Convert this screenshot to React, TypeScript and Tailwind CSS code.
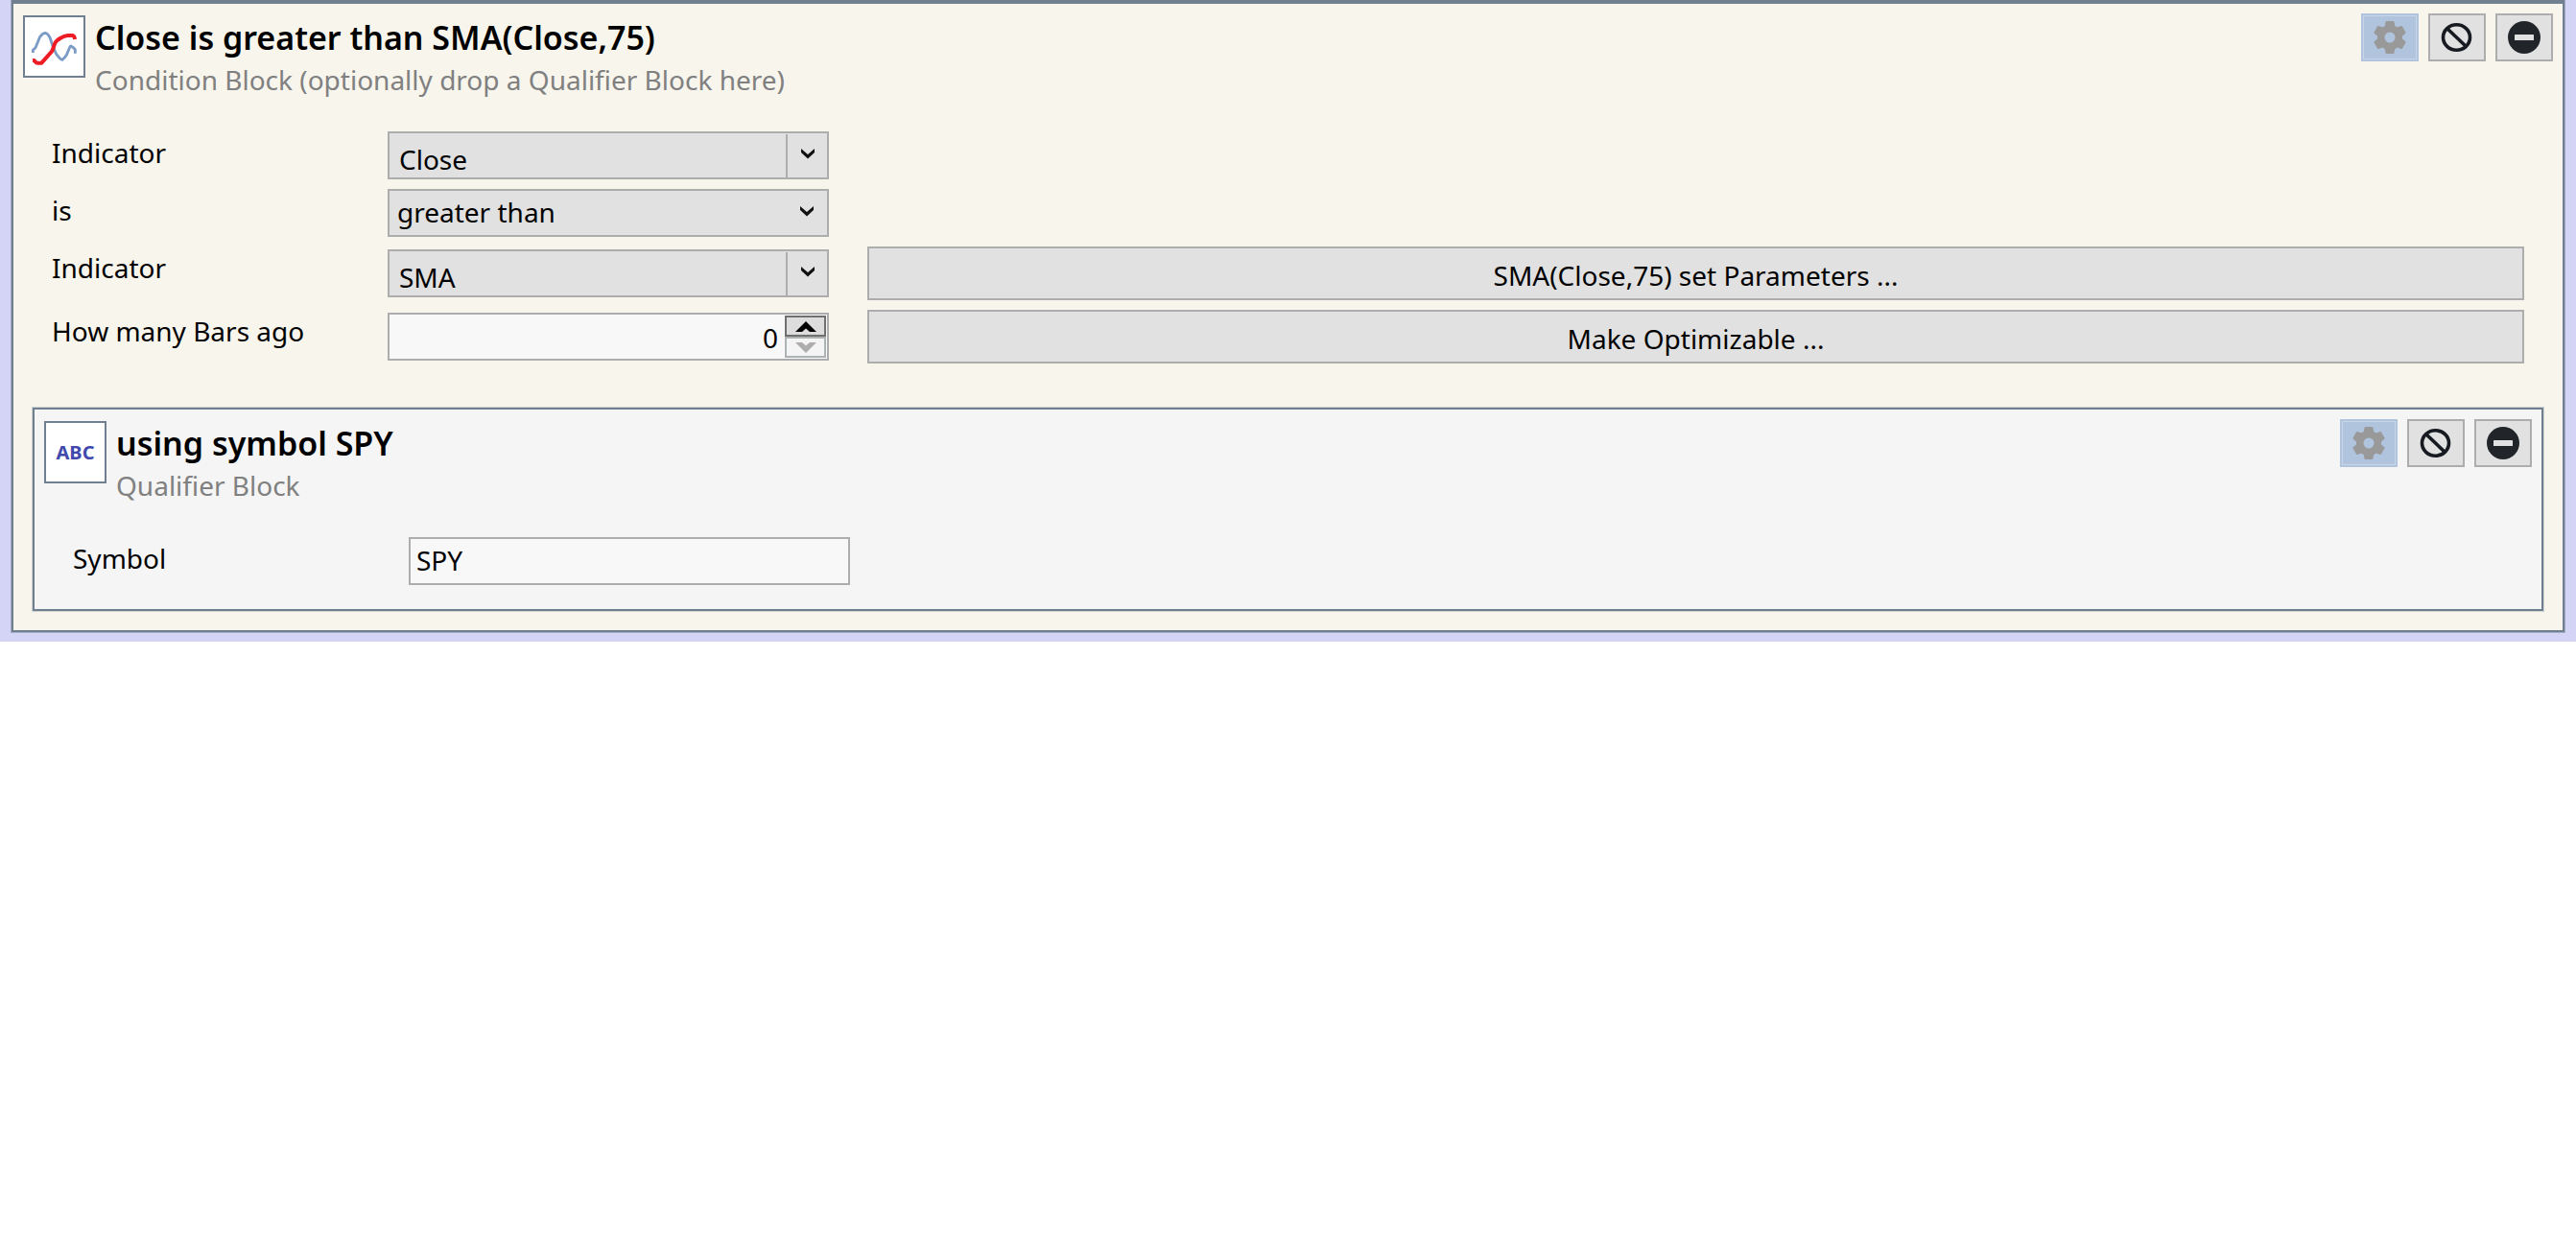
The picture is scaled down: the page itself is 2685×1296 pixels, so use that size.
import React, { useId, useState } from 'react';

// Icons
function GearIcon() {
  return (
    <svg width="34" height="34" viewBox="-17 -17 34 34" fill="#999999" aria-hidden="true">
      <defs>
        <mask id="gear-hole">
          <rect x="-17" y="-17" width="34" height="34" fill="#fff" />
          <circle r="5.5" fill="#000" />
        </mask>
      </defs>
      <g mask="url(#gear-hole)">
        <circle r="13" />
        {[0, 60, 120, 180, 240, 300].map(a => (
          <path key={a} d="M-5.5 -11 L-4.4 -16.2 Q-4.2 -17 -3.4 -17 H3.4 Q4.2 -17 4.4 -16.2 L5.5 -11 Z" transform={`rotate(${a})`} />
        ))}
      </g>
    </svg>
  );
}

function BanIcon() {
  return (
    <svg width="34" height="34" viewBox="-16.5 -17 34 34" fill="none" stroke="#171b21" strokeWidth="3.6" aria-hidden="true">
      <ellipse rx="14" ry="13.2" />
      <path d="M-10 -9.5 L10 9.5" />
    </svg>
  );
}

function RemoveIcon() {
  return (
    <svg width="34" height="34" viewBox="-17 -17 34 34" aria-hidden="true">
      <circle r="17" fill="#212529" />
      <rect x="-10" y="-3" width="20" height="6" rx="0.5" fill="#e1e1e1" />
    </svg>
  );
}

function ChartIcon() {
  return (
    <svg className="h-full w-full" viewBox="78 53 183 183" fill="none" strokeLinejoin="round" aria-hidden="true">
      <path d="M103 164 V156 L111 148 L125 114 Q133 103 141 102 Q149 103 156 116 L166 146 L176 168 L184 178 Q190 186 195 186 Q201 182 208 171 L216 152 Q219 143 222 143 Q230 147 235 154 V166" stroke="#7a9cc6" strokeWidth="8.5" />
      <path d="M102 188 H107 Q112 196 118 196 H130 L162 160 Q167 150 171 136 Q177 124 190 118 Q200 111 212 110 H228 Q233 112 234 122" stroke="#ee1c25" strokeWidth="12" />
    </svg>
  );
}

function Chevron() {
  return (
    <svg width="14" height="11" viewBox="0 0 14 11" aria-hidden="true">
      <path d="M0 0 L7 6 L14 0 V4 L7 10.5 L0 4 Z" fill="#111" />
    </svg>
  );
}

const iconButton = 'flex h-[50px] w-[60px] items-center justify-center border-2';

type HeaderProps = {
  icon: React.ReactNode;
  title: string;
  subtitle: string;
};

function BlockHeader({ icon, title, subtitle }: HeaderProps) {
  return (
    <header className="flex items-start justify-between">
      <div className="flex gap-2.5 pt-0.5">
        <div className="flex h-[65px] w-[65px] items-center justify-center border-2 border-[#708090] bg-white">{icon}</div>
        <div>
          <h2 className="text-[34px] font-semibold leading-[46px]">{title}</h2>
          <p className="leading-[42px] text-[#808080]">{subtitle}</p>
        </div>
      </div>
      <div className="flex gap-2.5">
        <button type="button" aria-label="Settings" className={`${iconButton} border-[#b0c4de] bg-[#b0c4de] ring-1 ring-inset ring-white/30`}>
          <GearIcon />
        </button>
        <button type="button" aria-label="Disable" className={`${iconButton} border-[#adadad] bg-[#e1e1e1]`}>
          <BanIcon />
        </button>
        <button type="button" aria-label="Remove" className={`${iconButton} border-[#adadad] bg-[#e1e1e1]`}>
          <RemoveIcon />
        </button>
      </div>
    </header>
  );
}

type RowProps = {
  label: string;
  action?: string;
  children: (id: string) => React.ReactNode;
};

function FormRow({ label, action, children }: RowProps) {
  const id = useId();
  return (
    <div className="flex items-center">
      <label htmlFor={id} className="w-[350px] shrink-0 self-start leading-[44px]">{label}</label>
      <div className="w-[460px] shrink-0">{children(id)}</div>
      {action && (
        <button type="button" className="ml-10 h-14 flex-1 border-2 border-[#adadad] bg-[#e1e1e1] pt-1 leading-[40px]">
          {action}
        </button>
      )}
    </div>
  );
}

type SelectProps = {
  id: string;
  options: string[];
  split?: boolean;
};

function SelectBox({ id, options, split }: SelectProps) {
  return (
    <div className="relative">
      <select
        id={id}
        className={`block h-[50px] w-full appearance-none rounded-none border-2 border-[#adadad] bg-[#e1e1e1] ${split ? 'pl-2.5 pt-1.5' : 'pb-0.5 pl-2'}`}
      >
        {options.map(o => <option key={o}>{o}</option>)}
      </select>
      <div className={`pointer-events-none absolute right-0.5 top-[3px] bottom-0.5 flex w-[43px] justify-center pt-[15px] ${split ? 'border-l-2 border-[#adadad]' : ''}`}>
        <Chevron />
      </div>
    </div>
  );
}

function NumberBox({ id }: { id: string }) {
  const [value, setValue] = useState(0);
  return (
    <div className="flex h-[50px] border-2 border-[#adadad] bg-[#f8f8f8]">
      <input
        id={id}
        type="text"
        inputMode="numeric"
        value={value}
        onChange={e => setValue(Number(e.target.value) || 0)}
        className="min-w-0 flex-1 bg-transparent pr-[7px] pt-0.5 text-right"
      />
      <div className="my-px mr-px flex w-[43px] flex-col">
        <button type="button" aria-label="Increase" onClick={() => setValue(value + 1)} className="flex flex-1 items-center justify-center border-2 border-[#707070] bg-[#dddddd]">
          <svg width="22" height="11" viewBox="0 0 22 11" aria-hidden="true"><path d="M0 11 L11 0 L22 11 H15 L11 7.5 L7 11 Z" /></svg>
        </button>
        <button type="button" aria-label="Decrease" disabled={value === 0} onClick={() => setValue(value - 1)} className="flex flex-1 items-center justify-center border-2 border-[#adb2b5] bg-[#f4f4f4]">
          <svg width="22" height="11" viewBox="0 0 22 11" fill="#adadad" aria-hidden="true"><path d="M0 0 L11 11 L22 0 H15 L11 3.5 L7 0 Z" /></svg>
        </button>
      </div>
    </div>
  );
}

export default function App() {
  const [symbol, setSymbol] = useState('SPY');

  return (
    <main className="bg-[#d4d4f7] px-3 pb-2.5 font-['Noto_Sans',sans-serif] text-[28px] text-black">
      {/* Condition block */}
      <section className="border-2 border-t-4 border-[#708090] bg-[#f8f5ed] pb-5 ring-1 ring-[#708090]/50">
        <div className="p-2.5 pb-0">
          <BlockHeader icon={<ChartIcon />} title="Close is greater than SMA(Close,75)" subtitle="Condition Block (optionally drop a Qualifier Block here)" />
        </div>

        <div className="mt-[33px] flex flex-col gap-2.5 px-10">
          <FormRow label="Indicator">{id => <SelectBox id={id} split options={['Close', 'Open', 'High', 'Low']} />}</FormRow>
          <FormRow label="is">{id => <SelectBox id={id} options={['greater than', 'less than', 'equal to']} />}</FormRow>
          <FormRow label="Indicator" action="SMA(Close,75) set Parameters ...">
            {id => <SelectBox id={id} split options={['SMA', 'EMA', 'RSI']} />}
          </FormRow>
          <FormRow label="How many Bars ago" action="Make Optimizable ...">{id => <NumberBox id={id} />}</FormRow>
        </div>

        {/* Qualifier block */}
        <section className="mx-5 mt-[46px] border-2 border-[#708090] bg-[#f5f5f5] p-2.5 pb-[25px] ring-1 ring-[#708090]/30">
          <BlockHeader
            icon={<span className="text-[20px] font-bold leading-none text-[#4149ad]">ABC</span>}
            title="using symbol SPY"
            subtitle="Qualifier Block"
          />
          <div className="mt-[33px] pl-[30px]">
            <FormRow label="Symbol">
              {id => (
                <input
                  id={id}
                  type="text"
                  value={symbol}
                  onChange={e => setSymbol(e.target.value)}
                  className="block h-[50px] w-full border-2 border-[#adadad] bg-[#f8f8f8] pb-0.5 pl-1.5"
                />
              )}
            </FormRow>
          </div>
        </section>
      </section>
    </main>
  );
}
